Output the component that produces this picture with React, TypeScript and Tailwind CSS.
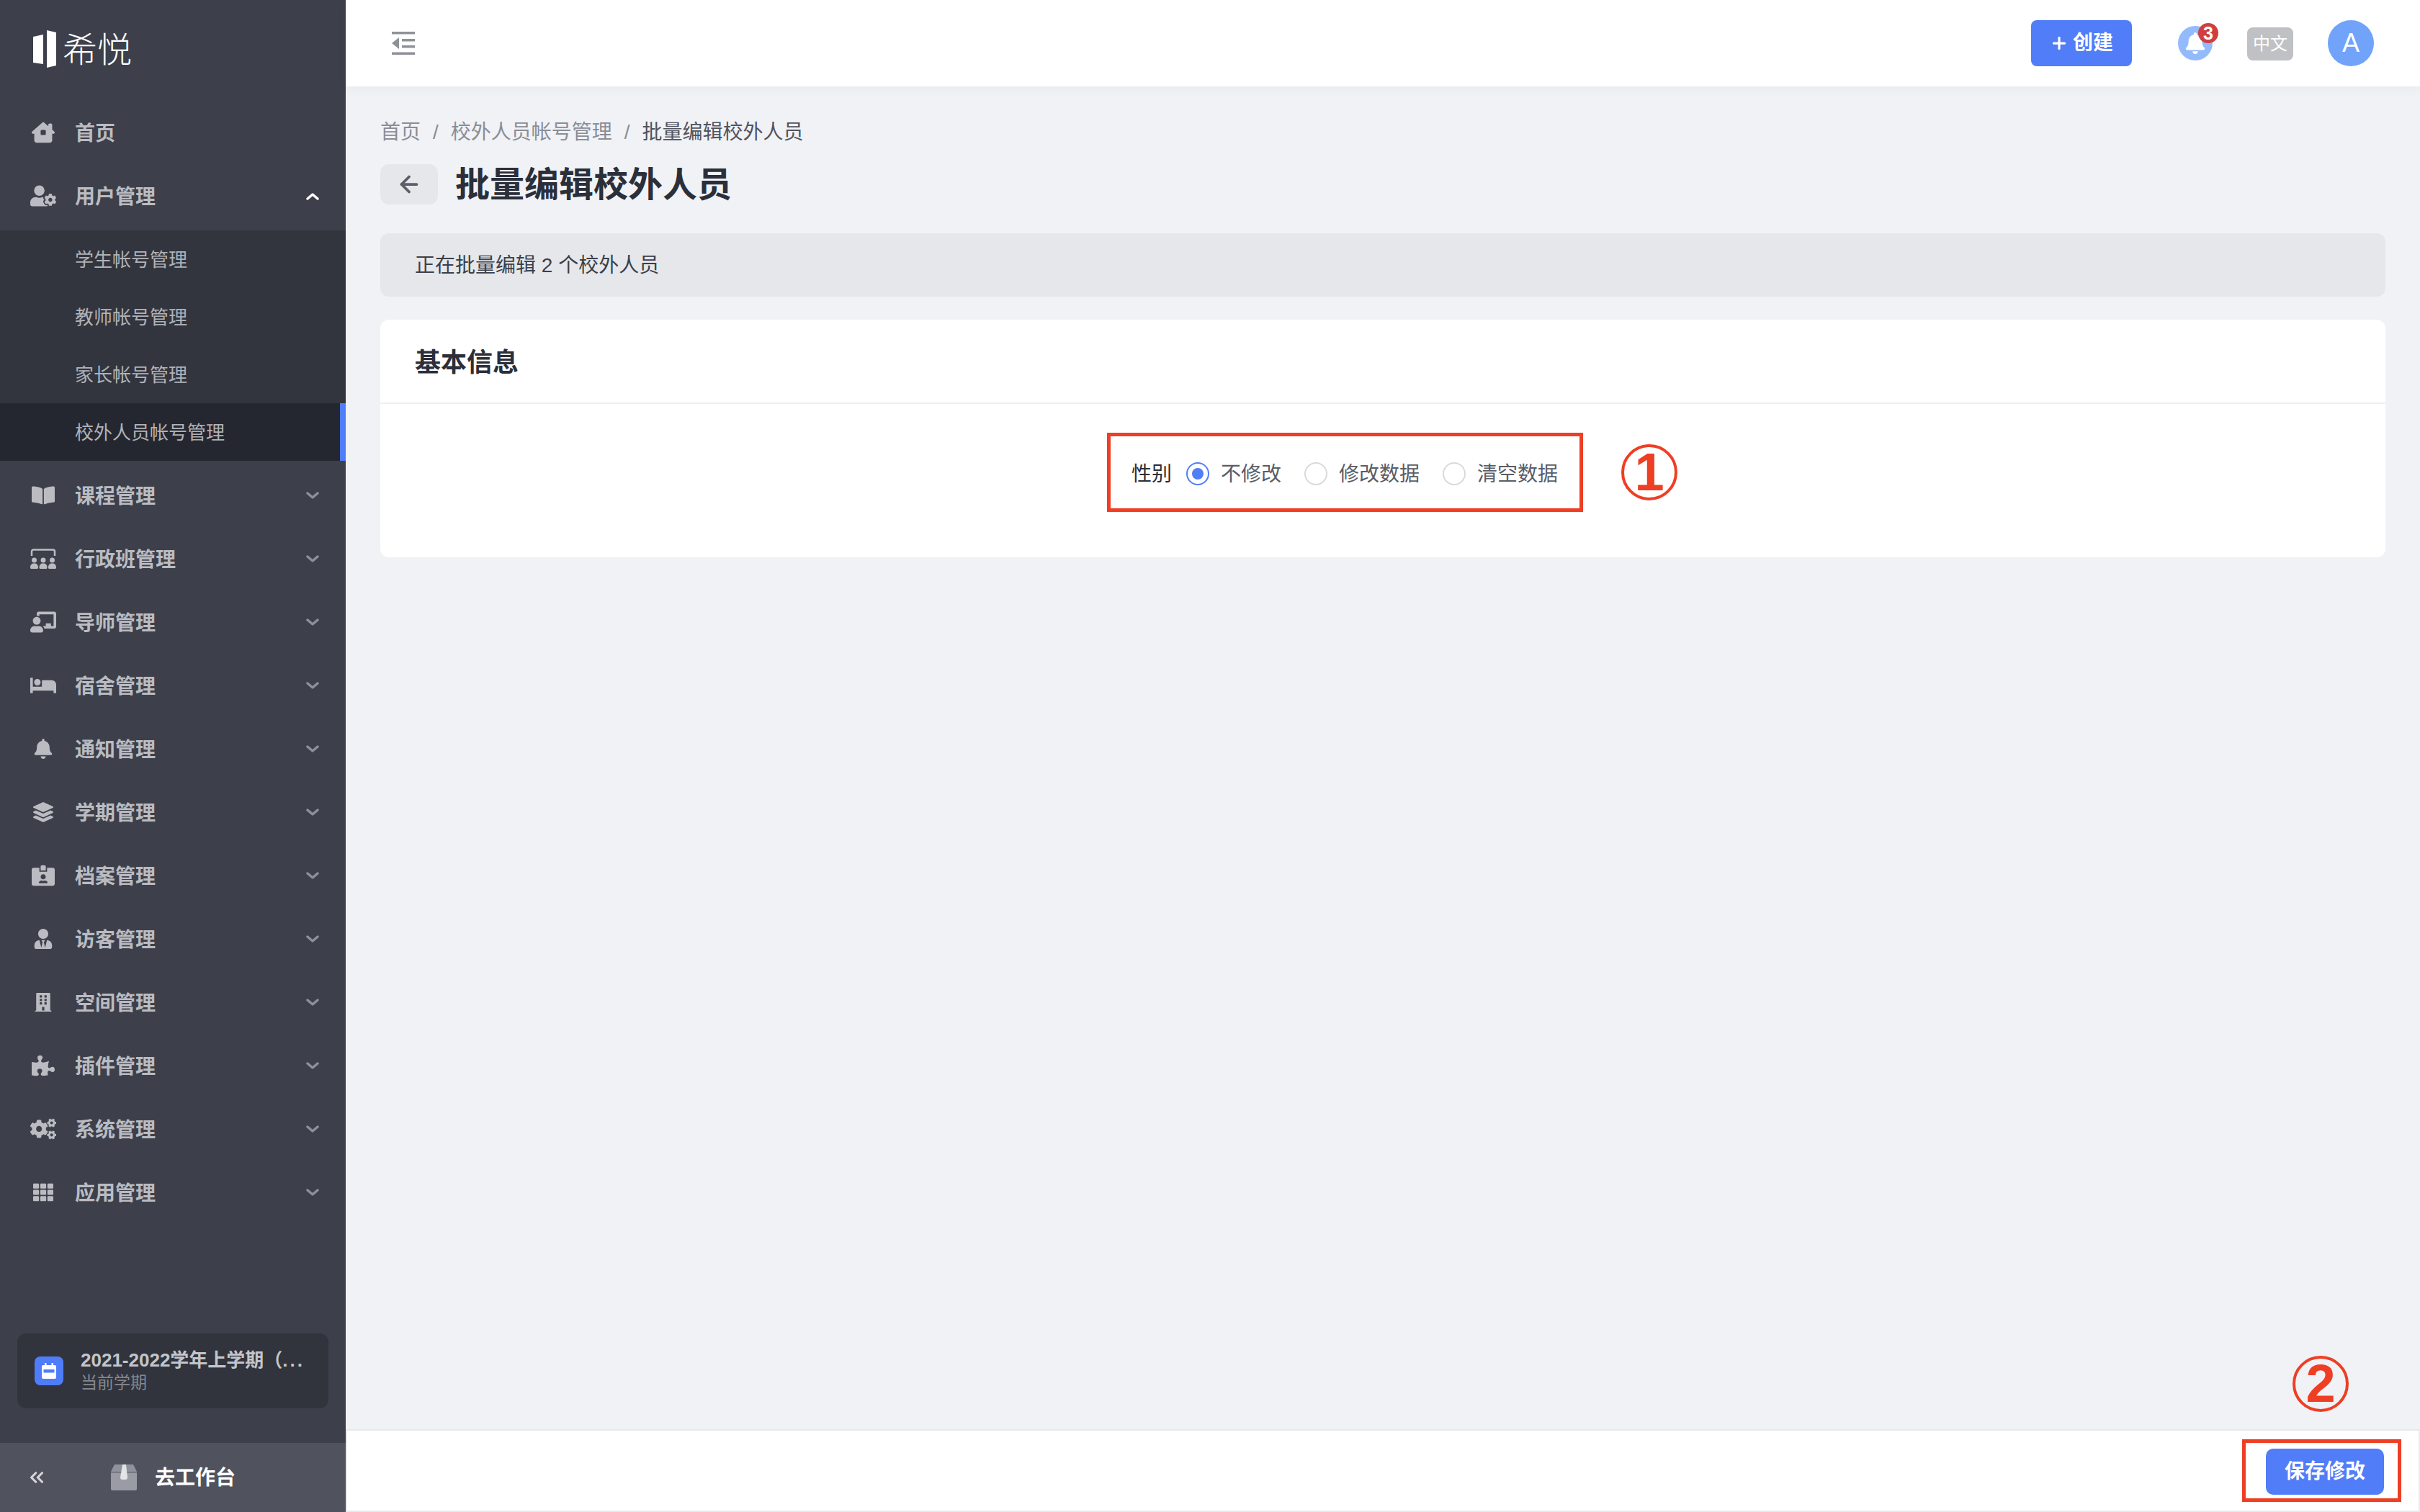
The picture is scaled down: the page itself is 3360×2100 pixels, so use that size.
import type { ReactNode } from "react";
import {
  FaBed,
  FaBell,
  FaBookOpen,
  FaBuilding,
  FaChalkboardTeacher,
  FaCogs,
  FaIdCardAlt,
  FaLayerGroup,
  FaPuzzlePiece,
  FaTh,
  FaUserCog,
  FaUserTie,
} from "react-icons/fa";
import { FaHouseChimneyWindow } from "react-icons/fa6";
import { ArrowLeft, ChevronsLeft, Plus } from "lucide-react";

function ClassIcon() {
  return (
    <svg width="36" height="28" viewBox="0 0 36 28" fill="currentColor">
      <path d="M2 10V4a2.500 2.500 0 0 1 2.500-2.500h27A2.500 2.500 0 0 1 34 4v6" fill="none" stroke="currentColor" strokeWidth="2.500" />
      <circle cx="5.500" cy="16" r="3.500" />
      <circle cx="18" cy="16" r="3.500" />
      <circle cx="30.500" cy="16" r="3.500" />
      <path d="M0 26c0-3.500 2-5.500 5.500-5.500s5.500 2 5.500 5.500c0 1.500-.5 2-2 2H2c-1.500 0-2-.5-2-2z" />
      <path d="M12.500 26c0-3.500 2-5.500 5.500-5.500s5.500 2 5.500 5.500c0 1.500-.5 2-2 2h-7c-1.500 0-2-.5-2-2z" />
      <path d="M25 26c0-3.500 2-5.500 5.500-5.500s5.500 2 5.500 5.500c0 1.500-.5 2-2 2h-7c-1.500 0-2-.5-2-2z" />
    </svg>
  );
}

function Chevron({ up, active }: { up?: boolean; active?: boolean }) {
  return (
    <svg
      width="18"
      height="11"
      viewBox="0 0 18 11"
      fill="none"
      stroke="currentColor"
      strokeWidth="3.500"
      strokeLinecap="round"
      strokeLinejoin="round"
      className={active ? "text-white" : "text-[#8d9097]"}
    >
      <path d={up ? "M2 9l7-6 7 6" : "M2 2l7 6 7-6"} />
    </svg>
  );
}

function NavRow({
  icon,
  label,
  open,
  noArrow,
}: {
  icon: ReactNode;
  label: string;
  open?: boolean;
  noArrow?: boolean;
}) {
  return (
    <div className="mt-2 flex h-20 items-center pr-[37px] text-[#babcc2]">
      <div className="ml-[42px] flex w-9 justify-center">{icon}</div>
      <span className="ml-[26px] flex-1 pt-[3px] text-[28px] font-semibold">{label}</span>
      {!noArrow && <Chevron up={open} active={open} />}
    </div>
  );
}

function SubRow({ label, active }: { label: string; active?: boolean }) {
  return (
    <div
      className={
        active
          ? "flex h-20 items-center border-r-8 border-[#4f7df9] bg-[#252730] pl-[104px] pt-[3px] text-[26px] text-[#b0b2b8]"
          : "flex h-20 items-center pl-[104px] pt-[3px] text-[26px] text-[#b0b2b8]"
      }
    >
      {label}
    </div>
  );
}

function Sidebar() {
  return (
    <aside className="flex h-full w-[480px] shrink-0 flex-col bg-[#3d404b]">
      <div className="flex h-[136px] items-center pl-[46px]">
        <svg width="33" height="52" viewBox="0 0 33 52" fill="white">
          <path d="M0 9l14-3v41L0 45z" />
          <path d="M19 0l13 3v46l-13 3z" />
        </svg>
        <span className="ml-2 pt-1 text-[48px] font-light leading-none text-white">希悦</span>
      </div>
      <nav>
        <NavRow icon={<FaHouseChimneyWindow size={32} />} label="首页" noArrow />
        <NavRow icon={<FaUserCog size={36} />} label="用户管理" open />
        <div className="mt-2 bg-[#32353e]">
          <SubRow label="学生帐号管理" />
          <SubRow label="教师帐号管理" />
          <SubRow label="家长帐号管理" />
          <SubRow label="校外人员帐号管理" active />
        </div>
        <NavRow icon={<FaBookOpen size={32} />} label="课程管理" />
        <NavRow icon={<ClassIcon />} label="行政班管理" />
        <NavRow icon={<FaChalkboardTeacher size={36} />} label="导师管理" />
        <NavRow icon={<FaBed size={36} />} label="宿舍管理" />
        <NavRow icon={<FaBell size={28} />} label="通知管理" />
        <NavRow icon={<FaLayerGroup size={28} />} label="学期管理" />
        <NavRow icon={<FaIdCardAlt size={32} />} label="档案管理" />
        <NavRow icon={<FaUserTie size={28} />} label="访客管理" />
        <NavRow icon={<FaBuilding size={26} />} label="空间管理" />
        <NavRow icon={<FaPuzzlePiece size={32} />} label="插件管理" />
        <NavRow icon={<FaCogs size={36} />} label="系统管理" />
        <NavRow icon={<FaTh size={28} />} label="应用管理" />
      </nav>
      <div className="flex-1" />
      <div className="mx-6 mb-12 flex h-[104px] items-center rounded-xl bg-[#31343d] pl-6">
        <div className="flex h-10 w-10 shrink-0 items-center justify-center rounded-lg bg-[#4f7df9]">
          <svg width="22" height="22" viewBox="0 0 22 22" fill="white">
            <path d="M5 0h2.500v3h7V0H17v3h2a2 2 0 0 1 2 2v15a2 2 0 0 1-2 2H3a2 2 0 0 1-2-2V5a2 2 0 0 1 2-2h2z" />
            <rect x="3.500" y="9" width="15" height="4.500" fill="#4f7df9" />
          </svg>
        </div>
        <div className="ml-6 w-[320px]">
          <div className="whitespace-nowrap text-[26px] font-bold leading-[32px] text-[#c3c5ca]">
            2021-2022学年上学期（<span className="tracking-[3px]">...</span>
          </div>
          <div className="text-[23px] leading-[30px] text-[#85888f]">当前学期</div>
        </div>
      </div>
      <div className="flex h-24 items-center bg-[#50535e]">
        <ChevronsLeft size={30} strokeWidth={2.5} className="ml-9 text-[#d5d6da]" />
        <svg width="36" height="36" viewBox="0 0 36 36" className="ml-[88px]">
          <path d="M5 0h26l5 10H0z" fill="#8f929b" />
          <rect y="10" width="36" height="1.500" fill="#6c6f78" />
          <path d="M0 11.500h36V34a2 2 0 0 1-2 2H2a2 2 0 0 1-2-2z" fill="#999ca4" />
          <path d="M16 0h5l2 18a3 3 0 0 1-3 3h-4a3 3 0 0 1-3-3z" fill="#e2e4e8" />
        </svg>
        <span className="ml-[25px] pt-[2px] text-[28px] font-semibold text-white">去工作台</span>
      </div>
    </aside>
  );
}

function Header() {
  return (
    <header className="relative z-10 flex h-[120px] shrink-0 items-center bg-white pl-16 pr-16 shadow-[0_4px_16px_rgba(0,0,0,0.04)]">
      <svg width="32" height="32" viewBox="0 0 32 32" fill="#8f9198">
        <rect width="32" height="3.500" />
        <rect y="28.500" width="32" height="3.500" />
        <rect x="14" y="10" width="18" height="3.500" />
        <rect x="14" y="19" width="18" height="3.500" />
        <path d="M10 8v16L0 16z" />
      </svg>
      <div className="flex-1" />
      <button className="flex h-16 w-[140px] items-center justify-center rounded-lg bg-[#517df8] text-[28px] font-bold text-white">
        <Plus size={26} strokeWidth={3} className="mr-1.5" />
        创建
      </button>
      <div className="relative ml-16 flex h-12 w-12 items-center justify-center rounded-full bg-[#93bbfb] text-white">
        <FaBell size={30} />
        <span className="absolute -right-2 -top-1 flex h-7 w-7 items-center justify-center rounded-full bg-[#d03f3f] text-[25px] font-bold leading-none text-white">
          3
        </span>
      </div>
      <div className="ml-12 mt-[2px] flex h-[46px] w-16 items-center justify-center rounded-lg bg-[#c0c1c4] text-[24px] text-white">
        中文
      </div>
      <div className="ml-12 flex h-16 w-16 items-center justify-center rounded-full bg-[#70a3f9] text-[36px] text-white">
        A
      </div>
    </header>
  );
}

function Radio({ label, checked }: { label: string; checked?: boolean }) {
  return (
    <div className="flex items-center">
      <span
        className={
          checked
            ? "flex h-8 w-8 items-center justify-center rounded-full border-2 border-[#517df8]"
            : "h-8 w-8 rounded-full border-2 border-[#d9d9d9]"
        }
      >
        {checked && <span className="h-4 w-4 rounded-full bg-[#517df8]" />}
      </span>
      <span className="ml-4 pt-[2px] text-[28px] text-[#5a5d66]">{label}</span>
    </div>
  );
}

function Mark({ children, className }: { children: ReactNode; className: string }) {
  return (
    <div
      className={`absolute flex h-[78px] w-[78px] items-center justify-center rounded-full border-4 border-[#ee3f24] text-[74px] font-bold leading-none text-[#ee3f24] ${className}`}
    >
      {children}
    </div>
  );
}

function Content() {
  return (
    <main className="flex-1 px-12 pt-[41px]">
      <div className="flex items-center pt-[3px] text-[28px] leading-10 text-[#8a8d95]">
        <span>首页</span>
        <span className="mx-[17px]">/</span>
        <span>校外人员帐号管理</span>
        <span className="mx-[17px]">/</span>
        <span className="text-[#50535e]">批量编辑校外人员</span>
      </div>
      <div className="mt-6 flex items-center">
        <div className="flex h-14 w-20 items-center justify-center rounded-xl bg-[#e5e7eb] text-[#5b5e68]">
          <ArrowLeft size={36} strokeWidth={2.5} />
        </div>
        <h1 className="ml-6 pt-[2px] text-[48px] font-bold leading-[54px] text-[#2b2f3a]">批量编辑校外人员</h1>
      </div>
      <div className="mt-10 flex h-[88px] items-center rounded-xl bg-[#e5e7eb] pl-12 pt-[2px] text-[28px] text-[#3b3f4a]">
        正在批量编辑 2 个校外人员
      </div>
      <section className="mt-8 h-[330px] rounded-xl bg-white">
        <div className="flex h-[117px] items-center border-b-2 border-[#eef0f3] pl-12 pt-1 text-[36px] font-bold text-[#2b2f3a]">
          基本信息
        </div>
        <div className="flex justify-center pr-[105px] pt-10">
          <div className="relative flex h-[110px] w-[661px] items-center border-[5px] border-[#ee3f24] pl-[29px] pt-[3px]">
            <span className="mr-5 pt-[2px] text-[28px] text-[#2b2f3a]">性别</span>
            <Radio label="不修改" checked />
            <div className="w-8" />
            <Radio label="修改数据" />
            <div className="w-8" />
            <Radio label="清空数据" />
            <Mark className="left-[709px] top-[11px]">1</Mark>
          </div>
        </div>
      </section>
    </main>
  );
}

function Footer() {
  return (
    <footer className="flex h-[115px] shrink-0 justify-end border-2 border-[#e8e9ed] bg-white pr-6 pt-3">
      <div className="relative h-[87px] w-[221px] border-[5px] border-[#ee3f24] pl-7 pt-2">
        <button className="flex h-16 w-[164px] items-center justify-center rounded-[10px] bg-[#517df8] text-[28px] font-semibold text-white">
          保存修改
        </button>
        <Mark className="left-[65px] top-[-121px]">2</Mark>
      </div>
    </footer>
  );
}

export default function App() {
  return (
    <div className="flex h-screen w-full overflow-hidden bg-[#f0f2f6] font-['Liberation_Sans','Noto_Sans_CJK_SC',sans-serif]">
      <Sidebar />
      <div className="flex min-w-0 flex-1 flex-col">
        <Header />
        <Content />
        <Footer />
      </div>
    </div>
  );
}
